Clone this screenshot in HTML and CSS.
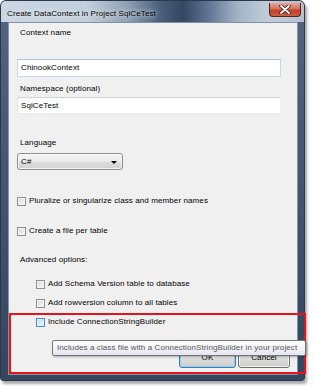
FILE: index.html
```html
<!DOCTYPE html>
<html lang="en">
<head>
    <meta charset="UTF-8">
    <title>Create DataContext</title>
    <link rel="stylesheet" href="styles.css">
</head>
<body>
    <div class="window">
        <div class="titlebar">
            <span class="title">Create DataContext in Project SqlCeTest</span>
            <div class="close-btn">
                <svg width="12" height="9" viewBox="0 0 12 9">
                    <path d="M2 1 L10 8 M10 1 L2 8" stroke="#3a1410" stroke-width="3.4" stroke-linecap="round"/>
                    <path d="M2 1 L10 8 M10 1 L2 8" stroke="#ffffff" stroke-width="1.8" stroke-linecap="round"/>
                </svg>
            </div>
        </div>

        <div class="client">
            <div class="label first">Context name</div>
            <div class="textbox focused">ChinookContext</div>

            <div class="label ns">Namespace (optional)</div>
            <div class="textbox ns-box">SqlCeTest</div>

            <div class="label lang">Language</div>
            <div class="combo">
                <span>C#</span>
                <span class="arrow"></span>
            </div>

            <div class="check-row pluralize">
                <span class="checkbox"></span>
                <span>Pluralize or singularize class and member names</span>
            </div>
            <div class="check-row per-table">
                <span class="checkbox"></span>
                <span>Create a file per table</span>
            </div>

            <div class="label advanced">Advanced options:</div>

            <div class="check-row indent schema">
                <span class="checkbox"></span>
                <span>Add Schema Version table to database</span>
            </div>
            <div class="check-row indent rowversion">
                <span class="checkbox"></span>
                <span>Add rowversion column to all tables</span>
            </div>
            <div class="check-row indent builder">
                <span class="checkbox hover"></span>
                <span>Include ConnectionStringBuilder</span>
            </div>

            <div class="buttons">
                <button class="btn default">OK</button>
                <button class="btn">Cancel</button>
            </div>
        </div>
    </div>

    <div class="highlight"></div>
    <div class="tooltip">Includes a class file with a ConnectionStringBuilder in your project</div>
</body>
</html>
```

FILE: styles.css
```css
* {
    box-sizing: border-box;
}

body {
    margin: 0;
    width: 314px;
    height: 388px;
    overflow: hidden;
    position: relative;
    background: #ffffff;
    font-family: "Liberation Sans", Arial, sans-serif;
    font-size: 8px;
    letter-spacing: 0.1px;
    color: #000;
}

.window {
    width: 305px;
    height: 381px;
    display: flex;
    flex-direction: column;
    padding: 0 6px 5px 7px;
    background: linear-gradient(180deg, #51657f 0%, #3f526b 60%, #34465d 100%);
    border: 1px solid #2c3849;
    border-radius: 6px 6px 3px 3px;
    box-shadow: 2px 3px 3px rgba(0, 0, 0, 0.35);
}

.titlebar {
    height: 21px;
    margin: 0 -6px 0 -7px;
    padding: 0 3px 0 6px;
    display: flex;
    align-items: flex-start;
    border-radius: 5px 5px 0 0;
    background: linear-gradient(90deg, #cbd6e2 0%, #c3cfdc 28%, #8e9fb4 42%, #4b617d 52%, #344860 60%, #5c7290 68%, #a3b3c6 78%, #c0ccd9 88%, #b4c2d2 100%);
}

.title {
    padding-top: 7px;
    line-height: 12px;
    text-shadow: 0 0 4px rgba(255, 255, 255, 0.9), 0 0 7px rgba(255, 255, 255, 0.6);
}

.close-btn {
    margin-left: auto;
    margin-top: 2px;
    width: 32px;
    height: 14px;
    border: 1px solid #5b2219;
    border-top: none;
    border-radius: 0 0 4px 4px;
    background: linear-gradient(180deg, #e8a395 0%, #d5705e 45%, #c0412d 55%, #cc5c3f 100%);
    display: flex;
    align-items: center;
    justify-content: center;
}

.client {
    flex: 1;
    background: #f0f0f0;
    border: 1px solid #8593a7;
    padding: 0 0 0 8px;
    display: flex;
    flex-direction: column;
    align-items: flex-start;
}

.label {
    padding-left: 3px;
    line-height: 12px;
    height: 12px;
}

.label.first { margin-top: 4px; }
.label.ns { margin-top: 6px; }
.label.lang { margin-top: 23px; }
.label.advanced { margin-top: 17px; }

.textbox {
    width: 264px;
    height: 18px;
    margin-top: 20px;
    background: #ffffff;
    border: 1px solid #c4d8ea;
    border-top-color: #a9c3dc;
    padding: 0 0 0 3px;
    line-height: 16px;
}

.textbox.ns-box {
    height: 17px;
    margin-top: 2px;
    border-color: #d3d4d8 #eceef1 #eceef1 #e4e5e9;
    line-height: 15px;
}

.combo {
    width: 106px;
    height: 17px;
    margin-top: 4px;
    border: 1px solid #8d8d8d;
    border-radius: 3px;
    background: linear-gradient(180deg, #f3f3f3 0%, #ececec 48%, #dedede 52%, #d2d2d2 100%);
    padding: 0 5px 0 3px;
    display: flex;
    align-items: center;
    justify-content: space-between;
    box-shadow: inset 0 0 0 1px rgba(255, 255, 255, 0.7);
}

.arrow {
    width: 0;
    height: 0;
    border-left: 3px solid transparent;
    border-right: 3px solid transparent;
    border-top: 3px solid #000;
    margin-top: 1px;
}

.check-row {
    display: flex;
    align-items: center;
    gap: 3px;
    height: 12px;
    line-height: 12px;
}

.check-row.indent { padding-left: 19px; }

.check-row.pluralize { margin-top: 25px; }
.check-row.per-table { margin-top: 18px; }
.check-row.schema { margin-top: 12px; }
.check-row.rowversion { margin-top: 7px; }
.check-row.builder { margin-top: 7px; }

.checkbox {
    width: 9px;
    height: 9px;
    border: 1px solid #8f8f8f;
    background: linear-gradient(135deg, #d6d6d6 0%, #ececec 60%, #f6f6f6 100%);
    box-shadow: inset 0 0 0 1px #f4f4f4;
}

.checkbox.hover {
    border-color: #4c8cc2;
    background: linear-gradient(135deg, #bfe2f6 0%, #d6eefb 60%, #e9f6fd 100%);
    box-shadow: inset 0 0 0 1px #def1fc;
}

.buttons {
    align-self: flex-end;
    display: flex;
    gap: 2px;
    margin-top: 19px;
    margin-right: 7px;
}

.btn {
    height: 21px;
    width: 52px;
    padding: 0;
    font-family: inherit;
    font-size: 8px;
    letter-spacing: 0.1px;
    color: #000;
    border: 1px solid #707070;
    border-radius: 3px;
    background: linear-gradient(180deg, #f2f2f2 0%, #ebebeb 48%, #dddddd 52%, #cfcfcf 100%);
    box-shadow: inset 0 0 0 1px rgba(255, 255, 255, 0.75);
}

.btn.default {
    width: 57px;
    border-color: #3c7fb1;
    box-shadow: inset 0 0 0 1px #8fd0f2;
}

.highlight {
    position: absolute;
    left: 9px;
    top: 313px;
    width: 297px;
    height: 61px;
    border: 2px solid #e3141c;
}

.tooltip {
    position: absolute;
    left: 52px;
    top: 340px;
    width: 254px;
    height: 16px;
    padding-left: 4px;
    line-height: 14px;
    color: #575757;
    white-space: nowrap;
    border: 1px solid #767676;
    border-radius: 2px;
    background: linear-gradient(180deg, #ffffff 0%, #e4e5f0 100%);
    box-shadow: 1px 1px 2px rgba(0, 0, 0, 0.3);
}
```
